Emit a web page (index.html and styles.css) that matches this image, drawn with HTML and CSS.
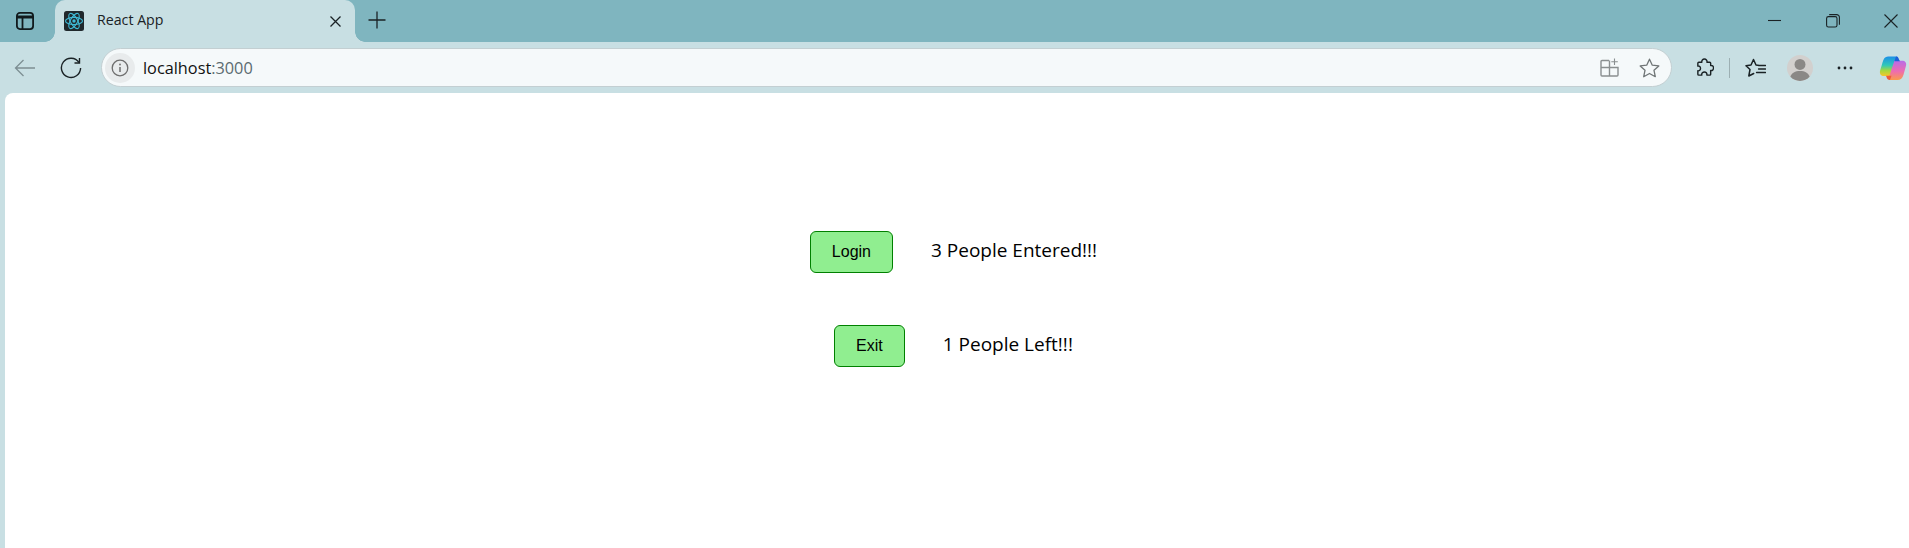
FILE: index.html
```html
<!DOCTYPE html>
<html lang="en">
<head>
<meta charset="utf-8">
<title>React App</title>
<link rel="stylesheet" href="styles.css">
</head>
<body>
<div class="browser">
  <header class="tabstrip">
    <svg class="sidebar-ico" width="20" height="20" viewBox="0 0 20 20" fill="none" stroke="#111a1d" stroke-width="1.8"><rect x="1.9" y="1.9" width="16.2" height="16.2" rx="3"/><path d="M2 6h16" stroke-width="3"/><path d="M7.500 6v12"/></svg>
    <div class="tab">
      <svg class="favicon" width="20" height="20" viewBox="0 0 20 20" fill="none" stroke="#3fb8d4" stroke-width="1.1"><rect width="20" height="20" rx="2.5" fill="#20282c" stroke="none"/><ellipse cx="10" cy="10" rx="8.5" ry="3.6"/><ellipse cx="10" cy="10" rx="8.5" ry="3.6" transform="rotate(60 10 10)"/><ellipse cx="10" cy="10" rx="8.5" ry="3.6" transform="rotate(120 10 10)"/><circle cx="10" cy="10" r="1.7" fill="#3fb8d4" stroke="none"/></svg>
      <span class="tab-title">React App</span>
      <svg class="tab-close" width="11" height="11" viewBox="0 0 11 11" stroke="#1a2225" stroke-width="1.3" fill="none"><path d="M.5.5l10 10M10.500.5l-10 10"/></svg>
    </div>
    <svg class="new-tab" width="18" height="18" viewBox="0 0 18 18" stroke="#1a2225" stroke-width="1.3" fill="none"><path d="M9 .5v17M.5 9h17"/></svg>
    <div class="window-controls">
      <svg width="14" height="14" viewBox="0 0 14 14" stroke="#1a2225" stroke-width="1.1" fill="none"><path d="M0 6.500h13"/></svg>
      <svg width="14" height="14" viewBox="0 0 14 14" stroke="#1a2225" stroke-width="1.1" fill="none"><rect x=".6" y="2.600" width="10.400" height="10.400" rx="1.800"/><path d="M3.200.6h7.300a2.800 2.800 0 0 1 2.900 2.900v7.200"/></svg>
      <svg width="14" height="14" viewBox="0 0 14 14" stroke="#1a2225" stroke-width="1.1" fill="none"><path d="M.5.5l13 13M13.500.5l-13 13"/></svg>
    </div>
  </header>
  <nav class="toolbar">
    <svg class="back" width="22" height="18" viewBox="0 0 22 18" stroke="#7d8e93" stroke-width="1.3" fill="none"><path d="M21 9H1.500M9.500 1L1.500 9l8 8"/></svg>
    <svg class="reload" width="22" height="22" viewBox="0 0 22 22" stroke="#1a2225" stroke-width="1.4" fill="none"><path d="M19 5.500A9.600 9.600 0 1 0 20.600 11"/><path d="M19.500 1v5h-5"/></svg>
    <div class="address">
      <span class="info-chip">
        <svg width="18" height="18" viewBox="0 0 18 18" fill="none" stroke="#6e6e6e" stroke-width="1.300"><circle cx="9" cy="9" r="7.800"/><path d="M9 8v5" stroke-width="1.500"/><circle cx="9" cy="5.500" r=".9" fill="#6e6e6e" stroke="none"/></svg>
      </span>
      <span class="url">localhost<span class="port">:3000</span></span>
      <svg class="split" width="19" height="19" viewBox="0 0 19 19" fill="none" stroke="#8a8f90" stroke-width="1.400"><path d="M9 2.500H2a1 1 0 0 0-1 1V17a1 1 0 0 0 1 1h15a1 1 0 0 0 1-1V9.500H1M9.500 2.500V18"/><path d="M14.500 .5v6.500M11.300 3.700h6.500" stroke-width="1.100"/></svg>
      <svg class="star" width="21" height="20" viewBox="0 0 21 20" fill="none" stroke="#6f7576" stroke-width="1.300" stroke-linejoin="round"><path d="M10.500 1.200l2.800 6 6.500.7-4.800 4.400 1.300 6.400-5.800-3.200-5.800 3.200 1.300-6.400L1.200 7.900l6.500-.7z"/></svg>
    </div>
    <svg class="ext" width="19" height="19" viewBox="0 0 20 20" fill="none" stroke="#1a2225" stroke-width="1.500" stroke-linejoin="round"><path d="M4 4.500h3.200c-.4-2 1-3.400 2.700-3.400s3.100 1.400 2.700 3.400h2.900a1 1 0 0 1 1 1V8c2-.4 3 1 3 2.500s-1 3-3 2.600V17a1 1 0 0 1-1 1h-3c.3-2-1-3.300-2.600-3.300S6.800 16 7.100 18H4a1 1 0 0 1-1-1v-3.500c1.600.3 2.800-.9 2.800-2.500S4.600 8.200 3 8.500v-3a1 1 0 0 1 1-1z"/></svg>
    <span class="sep"></span>
    <svg class="fav" width="21" height="20" viewBox="0 0 21 20" fill="none" stroke="#1a2225" stroke-width="1.500" stroke-linejoin="round" stroke-linecap="round"><path d="M13 7.200L11 7 8.500 1.500 6 7l-5 .8 4 3.700L3.800 18l4.900-2.500"/><path d="M13.500 7.500h7M13.500 11h7M11.500 14.500h9" stroke-width="1.300"/></svg>
    <svg class="avatar" width="26" height="26" viewBox="0 0 27 27"><circle cx="13.500" cy="13.500" r="13.500" fill="#d2d0ce"/><circle cx="13.500" cy="9.800" r="5.700" fill="#8a8886"/><path d="M3.500 22.500c1.200-4 5-6 10-6s8.800 2 10 6a13.500 13.500 0 0 1-20 0z" fill="#8a8886"/></svg>
    <svg class="more" width="16" height="4" viewBox="0 0 16 4" fill="#1a2225"><circle cx="2" cy="2" r="1.400"/><circle cx="8" cy="2" r="1.400"/><circle cx="14" cy="2" r="1.400"/></svg>
    <svg class="copilot" width="28" height="28" viewBox="0 0 28 28" fill="none">
      <defs>
        <linearGradient id="cpa" x1="0" y1="0" x2="0" y2="1"><stop offset="0" stop-color="#1a8fe8"/><stop offset=".45" stop-color="#30c8b8"/><stop offset=".72" stop-color="#a4d83e"/><stop offset="1" stop-color="#f6c72c"/></linearGradient>
        <linearGradient id="cpb" x1="0" y1="0" x2="0" y2="1"><stop offset="0" stop-color="#b86ce8"/><stop offset=".55" stop-color="#ee6cb0"/><stop offset="1" stop-color="#fb9a4c"/></linearGradient>
      </defs>
      <path d="M9 2.500h8.500c1.500 0 1.700 1 1.400 1.900L13.500 20c-.6 1.700-1.600 2-3 2H5c-3 0-4.500-2-4-5L3.500 8.500C4.500 4.500 6 2.500 9 2.500z" fill="url(#cpa)"/>
      <path d="M15 6.800h8c3.200 0 4.700 2 4 5l-2.500 9c-1 3.500-3 5.200-6 5.200h-7c-1.600 0-2.300-.9-1.800-2.300L15 8c.2-.8.200-1.200 0-1.200z" fill="url(#cpb)"/>
      <path d="M17 2.500c1.600 0 2.600 1 3 3l1 1.800h-5.600L17 2.500z" fill="#1d5fd8"/>
      <path d="M7 21.800h5.500L11 26c-2 0-3-1-3.300-2.500z" fill="#ef5a3a"/>
    </svg>
  </nav>
  <main class="page">
    <div class="counter">
      <button class="btn" type="button">Login</button>
      <span class="count">3 People Entered!!!</span>
    </div>
    <div class="counter">
      <button class="btn" type="button">Exit</button>
      <span class="count">1 People Left!!!</span>
    </div>
  </main>
</div>
</body>
</html>
```
FILE: styles.css
```css
* { box-sizing: border-box; }
html, body { margin: 0; padding: 0; height: 100%; overflow: hidden; }
body { background: #c8dfe3; font-family: "Open Sans", "Noto Sans", sans-serif; color: #000; }
.browser { display: flex; flex-direction: column; height: 548px; width: 1909px; }
svg { display: block; flex: none; }

.tabstrip { display: flex; align-items: center; height: 42px; background: #7fb5bf; flex: none; }
.sidebar-ico { margin-left: 15px; }
.tab { position: relative; display: flex; align-items: center; align-self: stretch; width: 300px; margin-left: 20px; padding-left: 9px; background: #c8dfe3; border-radius: 10px 10px 0 0; }
.tab::before, .tab::after { content: ""; position: absolute; bottom: 0; width: 10px; height: 10px; }
.tab::before { left: -10px; background: radial-gradient(circle at 0 0, transparent 9.500px, #c8dfe3 10px); }
.tab::after { right: -10px; background: radial-gradient(circle at 100% 0, transparent 9.500px, #c8dfe3 10px); }
.favicon { margin-top: -1px; }
.tab-title { margin-left: 13px; font-size: 14.2px; color: #1a2225; flex: 1; margin-top: -3px; }
.tab-close { margin-right: 14px; }
.new-tab { margin-left: 13px; margin-top: -2px; }
.window-controls { display: flex; gap: 44px; margin-left: auto; margin-right: 11px; }

.toolbar { display: flex; align-items: center; height: 51px; flex: none; }
.back { margin-left: 14px; }
.reload { margin-left: 24px; }
.address { display: flex; align-items: center; flex: none; width: 1571px; height: 39px; margin-left: 19px; padding-left: 3px; background: #f5f9fa; border: 1px solid #c3cfd2; border-radius: 20px; }
.info-chip { display: flex; align-items: center; justify-content: center; width: 30px; height: 30px; border-radius: 50%; background: #e8ebec; }
.url { margin-left: 8px; font-size: 16.3px; color: #111; flex: 1; }
.port { color: #5b6b70; }
.split { margin-right: 20px; }
.star { margin-right: 11px; }
.ext { margin-left: 23px; }
.sep { flex: none; width: 1px; height: 20px; margin-left: 15px; background: #9cafb3; }
.fav { margin-left: 15px; }
.avatar { margin-left: 21px; }
.more { margin-left: 24px; }
.copilot { margin-left: 26px; }

.page { flex: 1; margin-left: 5px; padding: 138px 7px 0 0; background: #fff; border-radius: 8px 0 0 0; display: flex; flex-direction: column; align-items: center; gap: 52px; }
.counter { display: flex; align-items: center; gap: 38px; height: 42px; }
.btn { height: 42px; padding: 0 21px; font-family: "Liberation Sans", Arial, sans-serif; font-size: 16px; color: #000; background: #90ee90; border: 1px solid #008000; border-radius: 6px; }
.count { font-size: 19px; margin-top: -4px; }
```
